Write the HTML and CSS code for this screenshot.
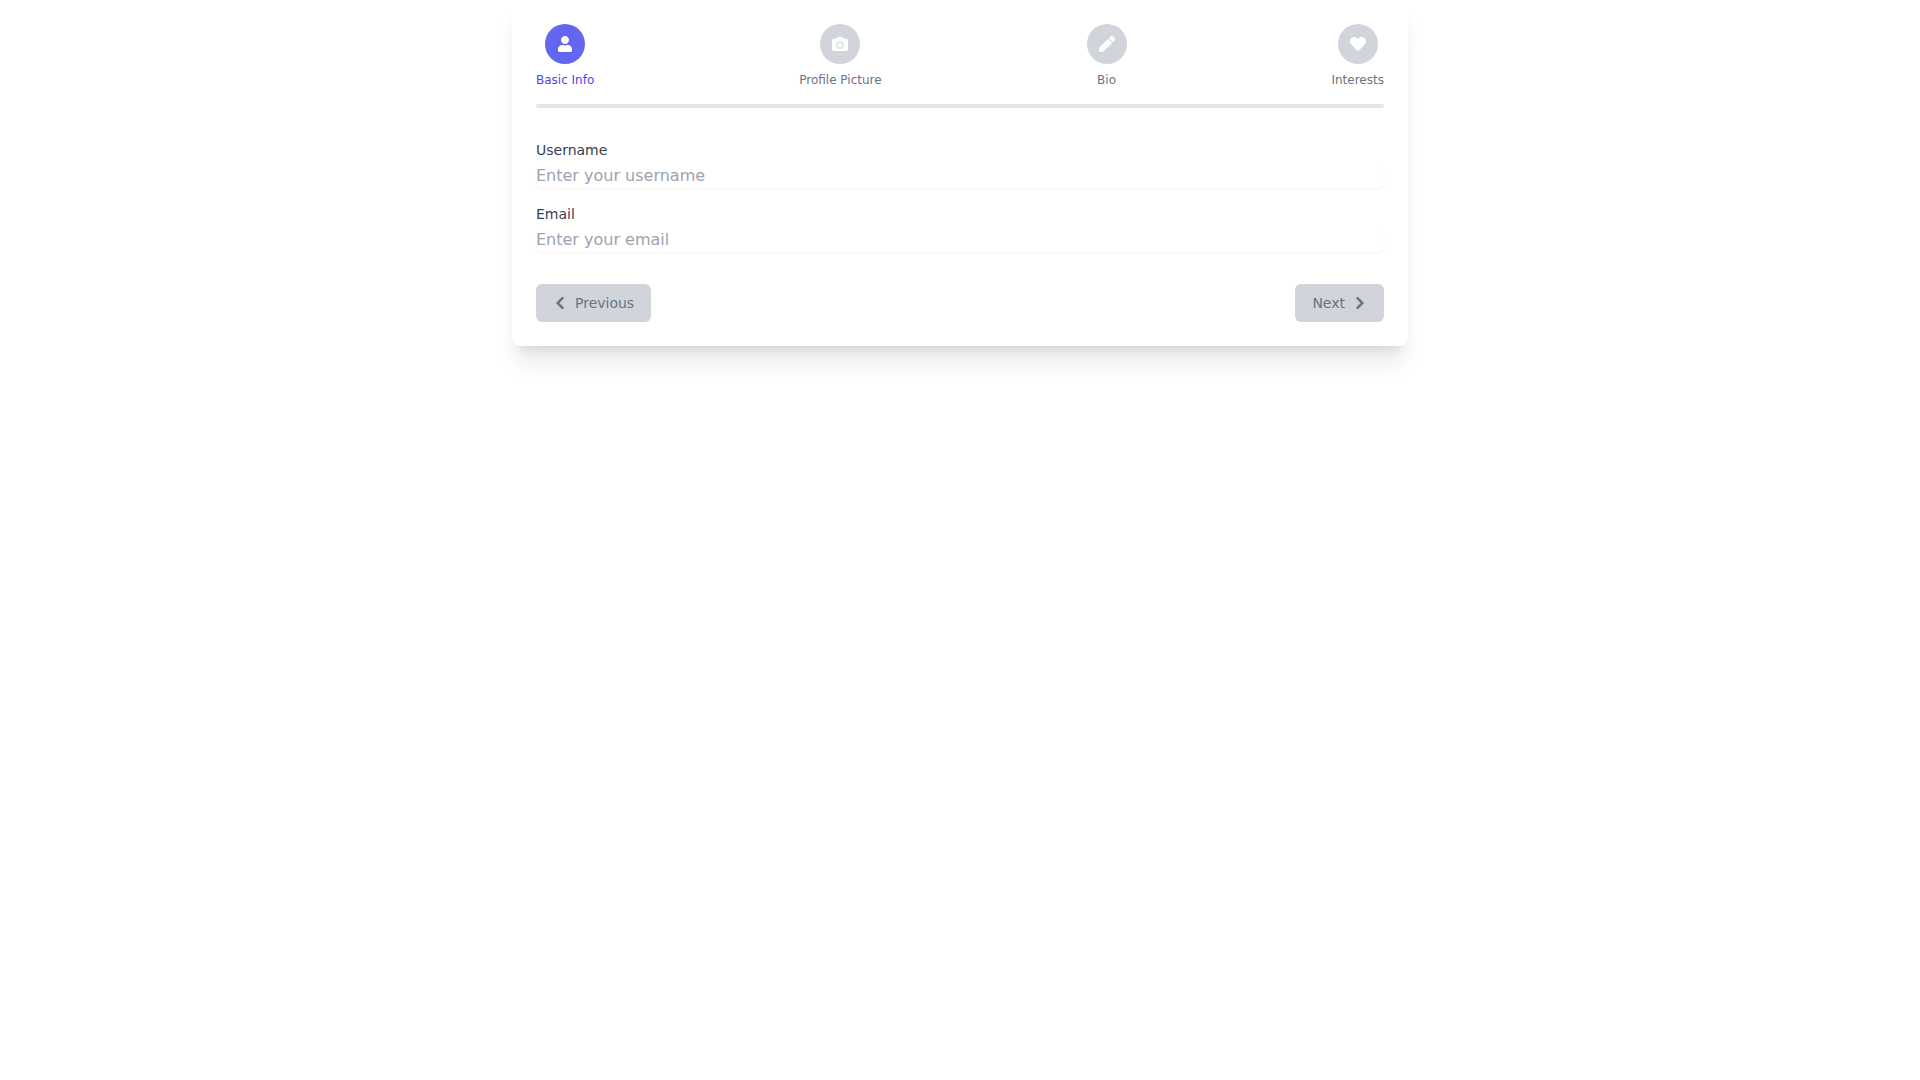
FILE: index.html
```html
<!DOCTYPE html>
<html lang="en">
<head>
  <meta charset="utf-8">
  <meta name="viewport" content="width=device-width, initial-scale=1">
  <title>Profile setup</title>
  <link rel="stylesheet" href="styles.css">
</head>
<body>
  <main class="card">
    <ol class="steps">
      <li class="step step-active" aria-current="step">
        <span class="step-icon"><svg class="icon" viewBox="0 0 448 512" aria-hidden="true"><path d="M224 256c70.7 0 128-57.3 128-128S294.7 0 224 0 96 57.3 96 128s57.3 128 128 128zm89.6 32h-16.7c-22.2 10.2-46.9 16-72.9 16s-50.6-5.8-72.9-16h-16.7C60.2 288 0 348.2 0 422.4V464c0 26.5 21.5 48 48 48h352c26.5 0 48-21.5 48-48v-41.6c0-74.2-60.2-134.4-134.4-134.4z"/></svg></span>
        <span>Basic Info</span>
      </li>
      <li class="step">
        <span class="step-icon"><svg class="icon" viewBox="0 0 512 512" aria-hidden="true"><path d="M512 144v288c0 26.5-21.5 48-48 48H48c-26.5 0-48-21.5-48-48V144c0-26.5 21.5-48 48-48h88l12.3-32.9c7-18.7 24.9-31.1 44.9-31.1h125.5c20 0 37.9 12.4 44.9 31.1L376 96h88c26.5 0 48 21.5 48 48zM376 288c0-66.2-53.8-120-120-120s-120 53.8-120 120 53.8 120 120 120 120-53.8 120-120zm-32 0c0 48.5-39.5 88-88 88s-88-39.5-88-88 39.5-88 88-88 88 39.5 88 88z"/></svg></span>
        <span>Profile Picture</span>
      </li>
      <li class="step">
        <span class="step-icon"><svg class="icon" viewBox="0 0 512 512" aria-hidden="true"><path d="M290.74 93.24l128.02 128.02-277.99 277.99-114.14 12.6C11.35 513.54-1.56 500.62.14 485.34l12.7-114.22 277.9-277.88zm207.2-19.06l-60.11-60.11c-18.75-18.75-49.16-18.75-67.91 0l-56.55 56.55 128.02 128.02 56.55-56.55c18.75-18.76 18.75-49.16 0-67.91z"/></svg></span>
        <span>Bio</span>
      </li>
      <li class="step">
        <span class="step-icon"><svg class="icon" viewBox="0 0 512 512" aria-hidden="true"><path d="M462.3 62.6C407.5 15.9 326 24.3 275.7 76.2L256 96.5l-19.7-20.3C186.1 24.3 104.5 15.9 49.7 62.6c-62.8 53.6-66.1 149.8-9.9 207.9l193.5 199.8c12.5 12.9 32.8 12.9 45.3 0l193.5-199.8c56.3-58.1 53-154.3-9.8-207.9z"/></svg></span>
        <span>Interests</span>
      </li>
    </ol>
    <div class="progress"></div>
    <form class="form">
      <div class="fields">
        <div class="field">
          <label for="username">Username</label>
          <input id="username" type="text" placeholder="Enter your username">
        </div>
        <div class="field">
          <label for="email">Email</label>
          <input id="email" type="email" placeholder="Enter your email">
        </div>
      </div>
      <div class="actions">
        <button class="button" type="button" disabled>
          <svg class="icon" viewBox="0 0 320 512" aria-hidden="true"><path d="M34.52 239.03L228.87 44.69c9.37-9.37 24.57-9.37 33.94 0l22.67 22.67c9.36 9.36 9.37 24.52.04 33.9L131.49 256l154.02 154.75c9.34 9.38 9.32 24.54-.04 33.9l-22.67 22.67c-9.37 9.37-24.57 9.37-33.94 0L34.52 272.97c-9.37-9.37-9.37-24.57 0-33.94z"/></svg>
          Previous
        </button>
        <button class="button" type="submit" disabled>
          Next
          <svg class="icon" viewBox="0 0 320 512" aria-hidden="true"><path d="M285.476 272.971L91.132 467.314c-9.373 9.373-24.569 9.373-33.941 0l-22.667-22.667c-9.357-9.357-9.375-24.522-.04-33.901L188.505 256 34.484 101.255c-9.335-9.379-9.317-24.544.04-33.901l22.667-22.667c9.373-9.373 24.569-9.373 33.941 0L285.475 239.03c9.373 9.372 9.373 24.568.001 33.941z"/></svg>
        </button>
      </div>
    </form>
  </main>
</body>
</html>
```
FILE: styles.css
```css
* {
  box-sizing: border-box;
}

body {
  min-height: 100vh;
  margin: 0;
  background: #fff;
  font-family: "DejaVu Sans", sans-serif;
  font-size: 16px;
  line-height: 24px;
}

.card {
  max-width: 896px;
  margin: 0 auto;
  padding: 24px;
  background: #fff;
  border-radius: 8px;
  box-shadow: 0 20px 25px -5px rgb(0 0 0 / 0.1), 0 8px 10px -6px rgb(0 0 0 / 0.1);
}

.icon {
  width: 1em;
  height: 1em;
  fill: currentColor;
}

.steps {
  display: flex;
  justify-content: space-between;
  margin: 0;
  padding: 0;
  list-style: none;
}

.step {
  display: flex;
  flex-direction: column;
  align-items: center;
  gap: 8px;
  color: #6b7280;
  font-size: 12px;
  line-height: 16px;
}

.step-icon {
  display: flex;
  align-items: center;
  justify-content: center;
  width: 40px;
  height: 40px;
  border-radius: 50%;
  background: #d1d5db;
  color: #fff;
  font-size: 16px;
}

.step-active {
  color: #4f46e5;
}

.step-active .step-icon {
  background: #6366f1;
}

.progress {
  height: 4px;
  margin-top: 16px;
  border-radius: 2px;
  background: #e5e5e5;
}

.form {
  margin-top: 32px;
}

.fields {
  display: grid;
  gap: 16px;
}

.field {
  display: grid;
  gap: 4px;
}

.field label {
  color: #374151;
  font-size: 14px;
  line-height: 20px;
}

.field input {
  width: 100%;
  height: 24px;
  padding: 0;
  border: 0;
  border-radius: 6px;
  background: #fff;
  box-shadow: 0 1px 2px rgb(0 0 0 / 0.05);
  color: #111827;
  font: inherit;
}

.field input::placeholder {
  color: #9ca3af;
}

.actions {
  display: flex;
  justify-content: space-between;
  margin-top: 32px;
}

.button {
  display: flex;
  align-items: center;
  gap: 8px;
  padding: 8px 16px;
  border: 1px solid transparent;
  border-radius: 6px;
  background: #d1d5db;
  color: #6b7280;
  font-family: inherit;
  font-size: 14px;
  line-height: 20px;
}

.button .icon {
  stroke: currentColor;
  stroke-width: 16px;
}
```
